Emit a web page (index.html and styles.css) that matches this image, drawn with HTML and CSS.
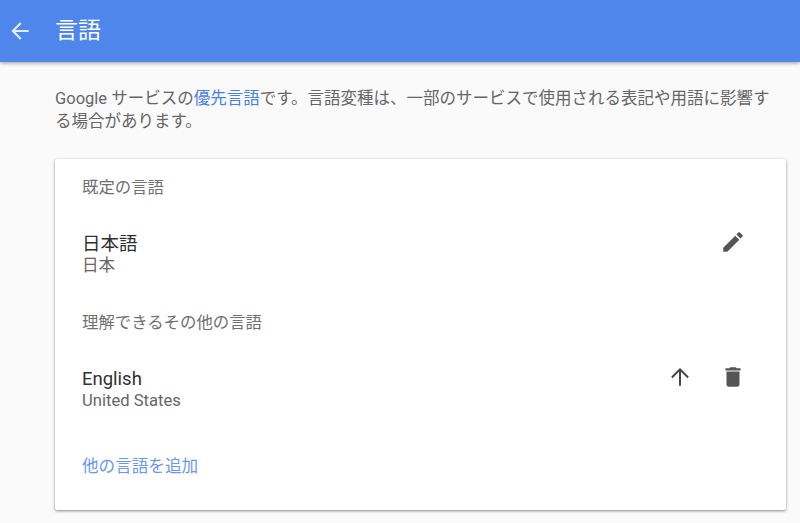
FILE: index.html
```html
<!DOCTYPE html>
<html lang="ja">
<head>
<meta charset="utf-8">
<title>言語</title>
<link rel="stylesheet" href="styles.css">
</head>
<body>
<header class="appbar">
  <svg class="back" viewBox="0 0 24 24" width="26" height="26"><path d="M20 11H7.83l5.59-5.59L12 4l-8 8 8 8 1.41-1.41L7.83 13H20v-2z"/></svg>
  <h1 class="title">言語</h1>
</header>
<main class="content">
  <p class="intro">Google サービスの<a class="link" href="#">優先言語</a>です。言語変種は、一部のサービスで使用される表記や用語に影響する場合があります。</p>
  <section class="card">
    <h2 class="label">既定の言語</h2>
    <div class="row row-default">
      <div class="lang">
        <div class="name">日本語</div>
        <div class="region">日本</div>
      </div>
      <div class="actions">
        <svg class="icon" viewBox="0 0 24 24" width="26" height="26"><path d="M3 17.25V21h3.75L17.81 9.94l-3.75-3.75L3 17.25zM20.71 7.04c.39-.39.39-1.02 0-1.41l-2.34-2.34c-.39-.39-1.02-.39-1.41 0l-1.83 1.83 3.75 3.75 1.83-1.83z"/></svg>
      </div>
    </div>
    <h2 class="label label-other">理解できるその他の言語</h2>
    <div class="row row-other">
      <div class="lang">
        <div class="name">English</div>
        <div class="region">United States</div>
      </div>
      <div class="actions">
        <svg class="icon icon-line" viewBox="0 0 24 24" width="26" height="26"><path d="M12 20V5M4.5 12.5L12 5l7.5 7.5"/></svg>
        <svg class="icon" viewBox="0 0 24 24" width="26" height="26"><path d="M6 19c0 1.1.9 2 2 2h8c1.1 0 2-.9 2-2V7H6v12zM19 4h-3.5l-1-1h-5l-1 1H5v2h14V4z"/></svg>
      </div>
    </div>
    <a class="add" href="#">他の言語を追加</a>
  </section>
</main>
</body>
</html>
```
FILE: styles.css
```css
* { box-sizing: border-box; }
html, body { margin: 0; height: 100%; }
body {
  background: #fafafa;
  font-family: Roboto, "Noto Sans CJK JP", sans-serif;
  color: #5f5f5f;
  overflow: hidden;
}
.appbar {
  height: 62px;
  background: #4f86ec;
  display: flex;
  align-items: center;
  gap: 22px;
  padding: 0 0 1px 7px;
  box-shadow: 0 1px 4px rgba(0,0,0,.4);
  position: relative;
}
.back { fill: #e3ecfc; flex: none; }
.title {
  margin: -5px 0 0;
  font-size: 23px;
  font-weight: 400;
  color: #fff;
}
.content { padding: 25px 14px 0 55px; }
.intro {
  margin: 0 0 26px;
  font-size: 16.5px;
  line-height: 23px;
  color: #666;
}
.link { color: #4a7fe8; text-decoration: none; }
.card {
  background: #fff;
  border-radius: 2px;
  box-shadow: 0 1px 3px rgba(0,0,0,.45);
  height: 351px;
  padding: 19px 27px 0;
}
.label {
  margin: 0;
  font-size: 16.4px;
  line-height: 20px;
  font-weight: 400;
  color: #707070;
}
.label-other { margin-top: 37px; }
.row { display: flex; justify-content: space-between; align-items: flex-start; }
.row-default { margin-top: 34px; }
.row-other { margin-top: 34px; }
.name { font-size: 18.5px; line-height: 24px; color: #303030; }
.region { font-size: 16.6px; line-height: 20px; color: #666; }
.actions { display: flex; gap: 27px; padding-right: 13px; margin-top: -3px; }
.icon { fill: #555; display: block; }
.icon-line { fill: none; stroke: #444; stroke-width: 1.8; }
.add { display: block; margin-top: 46px; font-size: 16.6px; line-height: 20px; color: #6b96ec; text-decoration: none; }
```
